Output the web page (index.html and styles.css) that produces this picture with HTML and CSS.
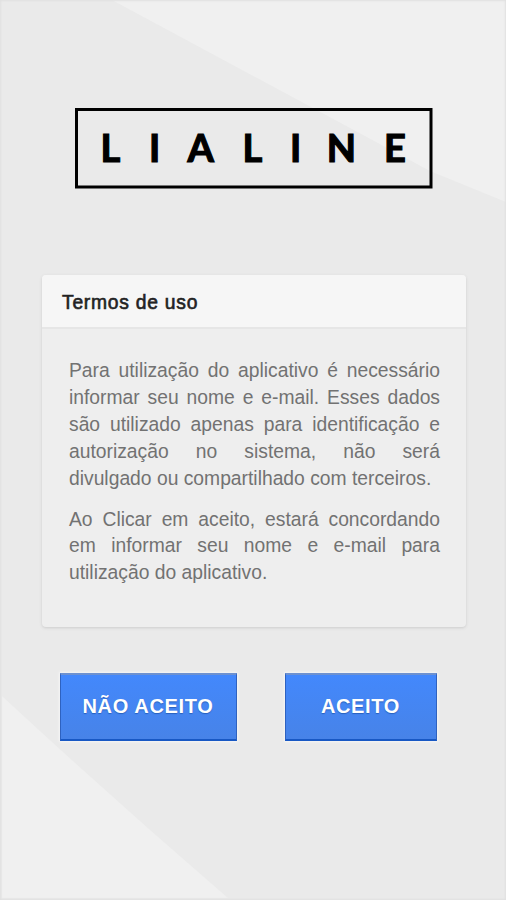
FILE: index.html
```html
<!DOCTYPE html>
<html lang="pt-BR">
<head>
<meta charset="utf-8">
<meta name="viewport" content="width=device-width, initial-scale=1">
<title>Lialine</title>
<link rel="stylesheet" href="styles.css">
</head>
<body>
<main class="screen">
  <svg class="backdrop" viewBox="0 0 506 900" aria-hidden="true">
    <path d="M112 0H506V202L430 171Z"/>
    <path d="M2 696Q112 798 228 898H2Z"/>
  </svg>
  <svg class="logo" viewBox="0 0 358 82" role="img" aria-label="Lialine">
    <path class="logo-frame" d="M1.5 2.500H356V80H1.5Z"/>
    <text class="logo-text" y="55" x="25.500 74 112.500 167.500 215 251.800 309">LIALINE</text>
  </svg>
  <section class="card">
    <h1 class="card-title">Termos de uso</h1>
    <div class="card-body">
      <p class="terms">
        <span class="line">Para utilização do aplicativo é necessário</span>
        <span class="line">informar seu nome e e-mail. Esses dados</span>
        <span class="line">são utilizado apenas para identificação e</span>
        <span class="line">autorização no sistema, não será</span>
        <span class="line last">divulgado ou compartilhado com terceiros.</span>
      </p>
      <p class="terms">
        <span class="line">Ao Clicar em aceito, estará concordando</span>
        <span class="line">em informar seu nome e e-mail para</span>
        <span class="line last">utilização do aplicativo.</span>
      </p>
    </div>
  </section>
  <div class="actions">
    <button class="btn decline">NÃO ACEITO</button>
    <button class="btn accept">ACEITO</button>
  </div>
</main>
</body>
</html>
```
FILE: styles.css
```css
* { box-sizing: border-box; }
body { margin: 0; background: #eaeaea; font-family: "Liberation Sans", Arial, sans-serif; }
.screen {
  position: relative;
  height: 900px;
  overflow: hidden;
  padding: 107px 40px 0 42px;
  box-shadow: inset 0 0 2px 1px #e0e0e0;
}
.backdrop { position: absolute; inset: 0; z-index: -1; width: 506px; height: 900px; fill: #f0f0f0; }
.logo { display: block; width: 358px; height: 82px; margin-left: 33px; }
.logo-frame { fill: none; stroke: #000; stroke-width: 3; }
.logo-text { font: 700 38px Lato, sans-serif; fill: #000; stroke: #000; stroke-width: 1.2; }
.card {
  height: 352px;
  margin-top: 86px;
  border-radius: 4px;
  background: #eee;
  box-shadow: 0 1px 3px #ccc;
  overflow: hidden;
}
.card-title {
  height: 54px;
  margin: 0;
  padding-left: 20px;
  border-bottom: 2px solid #e6e6e6;
  background: #f6f6f6;
  color: #222;
  font-size: 19.3px;
  line-height: 55px;
  font-weight: 400;
  letter-spacing: 0.75px;
  -webkit-text-stroke: 0.6px #222;
}
.card-body { padding: 29px 26px 0 27px; }
.terms { margin: 0 0 14px; color: #727272; font-size: 19.3px; line-height: 26.9px; }
.line { display: block; white-space: nowrap; text-align: justify; text-align-last: justify; }
.line.last { text-align-last: left; }
.actions { display: flex; gap: 48px; margin: 46px 0 0 17.500px; }
.btn {
  height: 68px;
  padding: 0 0 1px;
  border: 1px solid #2e62c0;
  border-top: 2px solid #6d91d0;
  border-bottom: 2px solid #1858c4;
  border-radius: 0;
  background: linear-gradient(#4388fc, #4783e8);
  box-shadow: 0 0 2px 1px #f6f6f6;
  color: #fff;
  font: 700 20px "Liberation Sans", Arial, sans-serif;
  letter-spacing: 0.65px;
  text-shadow: 0 1px 1px #2860bd;
}
.decline { width: 177px; }
.accept { width: 152px; }
```
